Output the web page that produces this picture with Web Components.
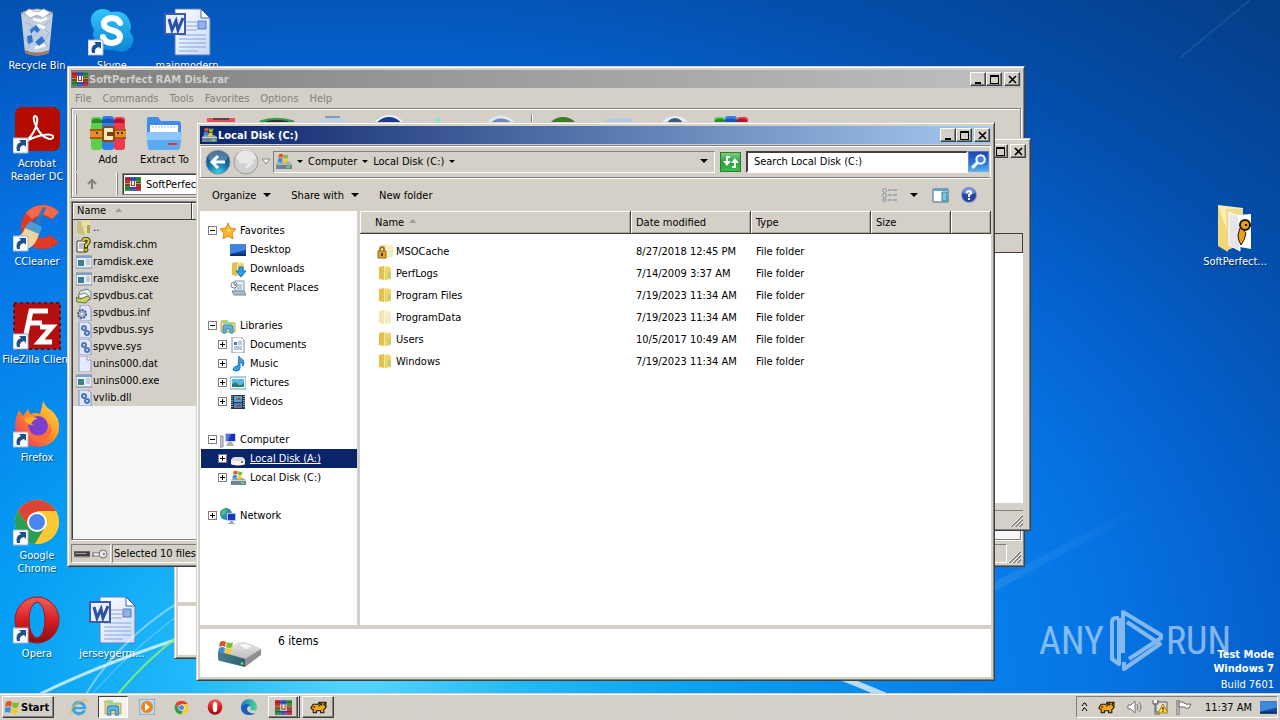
<!DOCTYPE html>
<html lang="en">
<head>
<meta charset="utf-8">
<title>Desktop</title>
<style>
  :root {
    --face: #d4d0c8;
    --shadow: #808080;
    --dark: #404040;
    --navy: #0a246a;
  }
  html, body { height: 100%; margin: 0; }
  body {
    overflow: hidden;
    color: #000;
    font: 11px/13px "DejaVu Sans Condensed", "DejaVu Sans", "Noto Sans", sans-serif;
  }
</style>
</head>
<body>
<win-desktop></win-desktop>

<script>
/* ---- icons ---------------------------------------------------------- */

// Each entry is [viewBox, markup]. Gradient ids are scoped by the shadow root.
const FLAG = `<path d="M1 2q3-2 6 0L6 7Q3 5 0 7z" fill="#e8502a"/><path d="M8 2q3 2 6 0l-1 5q-3 2-6 0z" fill="#7cbf2e"/>
  <path d="M0 8q3-2 6 0l-1 5q-3-2-6 0z" fill="#3b8ee0"/><path d="M7 8q3 2 6 0l-1 5q-3 2-6 0z" fill="#fbc725"/>`;
const RAR = `<path fill="#d02838" d="M0 1h5v5H0z"/><path fill="#3d5bd0" d="M5 1h6v5H5z"/><path fill="#2c9a3c" d="M11 1h5v5h-5z"/>
  <path fill="#2c9a3c" d="M0 10h5v5H0z"/><path fill="#4a5cc8" d="M5 10h6v5H5z"/><path fill="#c83048" d="M11 10h5v5h-5z"/>
  <path d="M0 3h16M0 12h16" stroke="#1c1420" opacity=".5"/><path fill="#7c4020" d="M0 6h16v4H0z"/><path fill="#c89060" d="M0 7h5v1H0zM11 7h5v1h-5z"/>
  <path fill="#f4ecdc" d="M5 5h6v6H5z"/><path fill="#8a4a28" d="M6 5h1v4h2V5h1v5H6z"/>`;
const DRIVE = `<path d="M1 10l3-2h9l3 2v5H1z" fill="#8fa6b4"/><path d="M1 10h15v5H1z" fill="#6b8496"/><path d="M1 10h15v1H1z" fill="#c8d6de"/><path d="M11 12h3v2h-3z" fill="#5ee05a"/>`;
const WINDRIVE = `${DRIVE}<g transform="translate(3 0) scale(.68)">${FLAG}</g>`;
const BADGE = `<path d="M0 32h15v15H0z" fill="#fff" stroke="#9bb6d8"/><path d="M4 45q-2-7 4-9l-2-2h7v7l-2-2q-5 1-4 6z" fill="#1f4f8c"/>`;
const FOLDER = `<path d="M2 2l5-1v14l-5-1z" fill="#e2c04c"/><path d="M7 1h5v13l-5 1z" fill="#f7e9a0"/><path d="M8 3l6-1v12l-6 1z" fill="#ecd468"/><path d="M11 8l3-1v6l-3 1z" fill="#bcd07a"/>`;
const WORD = `<defs><linearGradient id="w" x1="0" x2="1" y2="1"><stop stop-color="#fff"/><stop offset="1" stop-color="#c5d8f8"/></linearGradient></defs>
  <path d="M12 1h26l9 9v37H12z" fill="url(#w)" stroke="#5c7cc0"/><path d="M38 1v9h9z" fill="#fff" stroke="#3f5fae"/>
  <path d="M23 14h11M23 18h11M23 22h11M16 27h27M16 31h27M16 35h27M16 39h27M16 43h19" stroke="#8aa5dc"/>
  <path d="M35 13h8v8h-8z" fill="#8fb0e8" stroke="#5a7ac4"/><path d="M2 6h20v20H2z" fill="#e8f0fe" stroke="#3b5dae" stroke-width="2"/>
  <path d="M6 11l3 11 4-9 2 9 5-12" fill="none" stroke="#2b4fa4" stroke-width="3"/>`;
const CHROME = `<circle cx="24" cy="24" r="22" fill="#fbc934"/><path d="M5 13a22 22 0 0 1 38 0L24 14l-9 14z" fill="#dc4535"/>
  <path d="M5 13a22 22 0 0 0 17 33l10-17-16 0z" fill="#2b9f52"/><path d="M43 13H24v10l9 6-11 17a22 22 0 0 0 21-33z" fill="#fbc934"/>
  <circle cx="24" cy="24" r="10" fill="#fff"/><circle cx="24" cy="24" r="8" fill="#4a86ee"/>`;
const OPERA = `<defs><linearGradient id="o" x2="0" y2="1"><stop stop-color="#f4605c"/><stop offset=".5" stop-color="#d81e22"/><stop offset="1" stop-color="#8c0c10"/></linearGradient></defs>`;
const EXE = `<path d="M0 2h16v12H0z" fill="#e8eef8" stroke="#6c86a8"/><path d="M0 2h16v2H0z" fill="#7ba0d0"/><path d="M2 6h6v6H2z" fill="#3f7f8c"/><path d="M10 6h4M10 8h4M10 10h4" stroke="#98a8c0"/>`;
const SYS = `<path d="M3 0h9l3 3v13H3z" fill="#dfe8fa" stroke="#7f92c4"/><circle cx="8" cy="6" r="2" fill="none" stroke="#4c74b8" stroke-width="2"/><circle cx="11" cy="11" r="2" fill="none" stroke="#4c74b8" stroke-width="2"/>`;
const CREATURE = `<path d="M1 8l2-3h5l1-2h6v5l-2 2v3h-3v-2H6v2H3v-3l-2-1z" fill="#f2a818" stroke="#1c1408"/><path d="M8 3l2 2-2 2M15 3l-2 2 2 2M11 3v3" fill="none" stroke="#1c1408"/><path d="M3 7h2v1H3z"/>`;
const MONITOR = `<path d="M0 2h16v11H0z" fill="#16459c"/><path d="M0 2h16v6L0 12z" fill="#3f86dc"/><path d="M0 12h16v2H0z" fill="#0d2f6c"/>`;
const EXPLORER = `<path d="M1 3h5l1 2h8v9H1z" fill="#f6dc80" stroke="#c8a444"/><path d="M3 2h5v2h6v2H3z" fill="#9cd88c"/><path d="M3 15V9q0-2 2-2h6q2 0 2 2v6h-3v-4H6v4z" fill="#5cb4e4" stroke="#3a88bc"/>`;

const ICONS = {
  recycle: ['0 0 48 48', `<path d="M8 5l4 40q12 5 24 0l4-40z" fill="#d4dde4" fill-opacity=".9"/><path d="M8 5q16-8 32 0q-16 8-32 0z" fill="#f4f6f7" stroke="#8a98a4"/>
    <path d="M11 5l5-4 8 3 7-3 6 4-7 5-6-3-7 3z" fill="#fff" stroke="#a8b4b0"/><path d="M12 14l8 4-5 5M37 12l-7 7 6 6-5 8 4 5M12 30l5 7-3 4" fill="none" stroke="#a8b4ba"/><path d="M20 11l8 2 6-3M22 40l10-3M24 17l8 3" stroke="#f8fafa" stroke-width="3" fill="none"/>
    <path d="M17 22l6-5 4 5-3 3-3-3-3 4zM14 28l5-1 1 7-5 2zM22 34l7-6 3 5-6 5z" fill="#2f74d0"/><path d="M12 42q12 5 24 0v3q-12 5-24 0z" fill="#9c7a66"/>`],
  skype: ['0 0 48 48', `<defs><linearGradient id="s" x2="0" y2="1"><stop stop-color="#35c4f8"/><stop offset="1" stop-color="#0a86d8"/></linearGradient></defs>
    <path d="M14 1q6 0 9 3 17-3 20 14 0 3-1 6 6 7 1 15-8 8-17 3Q8 44 5 27q0-2 1-5Q1 14 4 7q4-6 10-6z" fill="url(#s)"/>
    <path d="M32 15q-2-5-9-5-7 1-7 6 0 4 7 6 9 2 9 7 0 5-8 6-7 0-9-6" fill="none" stroke="#fff" stroke-width="6" stroke-linecap="round"/>${BADGE}`],
  word: ['0 0 48 48', WORD],
  acrobat: ['0 0 48 48', `<rect x="2" y="1" width="45" height="44" rx="7" fill="#b30b00"/><path d="M10 37q8-4 13-16 3-10-1-11-3 1 1 10 5 11 13 13 5 0 4-3-3-3-14 0-10 3-16 7z" fill="none" stroke="#fff" stroke-width="2"/>${BADGE}`],
  ccleaner: ['0 0 48 48', `<path d="M46 8A22 22 0 1 0 46 38l-9-7a11 11 0 1 1 1-15z" fill="#df3a26"/><path d="M46 8A22 22 0 0 0 13 9l6 6q12-8 20 0z" fill="#f26a4c"/>
    <path d="M30 3l3 1-7 18-5-2z" fill="#2c78b8"/><path d="M17 17l12 6-3 8-15-6z" fill="#4c9cd4"/><path d="M12 24l14 6q-3 12-12 15L2 34q8-3 10-10z" fill="#f0d4a0"/>${BADGE}`],
  filezilla: ['0 0 48 48', `<rect x="1" y="1" width="46" height="46" fill="#b50f12" stroke="#6e0a0c" stroke-width="2" stroke-dasharray="3 3"/>
    <path d="M13 32L18 9h17M15 21h14M27 25h12L26 40h13" fill="none" stroke="#fff" stroke-width="5"/>${BADGE}`],
  firefox: ['0 0 48 48', `<defs><linearGradient id="f" x1="1" y1="0" x2="0" y2="1"><stop stop-color="#ffe24a"/><stop offset=".45" stop-color="#ff9422"/><stop offset="1" stop-color="#e8216c"/></linearGradient></defs>
    <path d="M30 1q3 7 8 9 9 8 8 18a22 19 0 0 1-44 0Q2 18 6 10l4 6 5-7 2 5q6-2 10 0 2-7 3-13z" fill="url(#f)"/><circle cx="25" cy="26" r="10" fill="#7b3fd0"/><path d="M11 19q8-4 14 0-4 0-6 3t3 3q-8 1-11-6z" fill="#ffb02a"/>
    <path d="M15 26q3 12 14 9 9-4 6-12 6 6 1 14-8 7-17 3-6-5-4-14z" fill="#ff6a34"/>${BADGE}`],
  chrome: ['0 0 48 48', CHROME + BADGE],
  chromeSmall: ['0 0 48 48', CHROME],
  opera: ['0 0 48 48', OPERA + `<path fill-rule="evenodd" d="M24 1a22 23 0 0 1 0 46 22 23 0 0 1 0-46zM24 6a8 18 0 0 0 0 36 8 18 0 0 0 0-36z" fill="url(#o)" stroke="#a81418"/>${BADGE}`],
  operaSmall: ['0 0 48 48', OPERA + `<ellipse cx="24" cy="24" rx="22" ry="23" fill="url(#o)"/><ellipse cx="24" cy="24" rx="7" ry="16" fill="#fff"/>`],
  softfolder: ['0 0 48 48', `<path d="M7 1l10 3v44L7 42z" fill="#f0d878"/><path d="M7 1l25 3v20H15z" fill="#f8eeb4"/><path d="M15 5h17l-1 35-14 6z" fill="#ecd890"/>
    <path d="M18 8l11 5v34l-11-6z" fill="#e8e4ec" stroke="#fff"/><path d="M27 11l13-1v35l-11-2z" fill="#fff"/>
    <circle cx="34" cy="21" r="5" fill="#e8a01c" stroke="#1c1408" stroke-width="2"/><path d="M29 24q4 2 6 5-1 7-5 12-3-5-3-10z" fill="#e8a01c" stroke="#1c1408"/><path d="M34 21h2" stroke="#1c1408" stroke-width="2"/>`],

  rar: ['0 0 16 16', RAR],
  rarBig: ['0 0 36 36', `<rect x="1" y="2" width="11" height="33" rx="3" fill="#5fcf4a"/><rect x="12" y="1" width="12" height="34" rx="3" fill="#2f7fe4"/><rect x="24" y="2" width="11" height="33" rx="3" fill="#ee3a4c"/>
    <path d="M2 5q5-3 10 0v3H2z" fill="#2a8a2c"/><path d="M12 5q6-3 12 0v3H12z" fill="#1c54b0"/><path d="M24 5q5-3 10 0v3H24z" fill="#b01828"/>
    <path d="M0 14h36v10H0z" fill="#e4902a"/><path d="M0 14h36v2H0zM0 22h36v2H0z" fill="#a85a14"/><rect x="13" y="12" width="11" height="14" rx="2" fill="#fbe8c0" stroke="#8a4a10" stroke-width="2"/><path d="M17 17h7v4h-7z" fill="#7a4010"/><path d="M6 18h2M27 18h2M31 18h2" stroke="#5a2c08" stroke-width="2"/>`],
  extract: ['0 0 36 36', `<path d="M1 4q0-2 2-2h9l3 4h17q3 0 3 3v8H1z" fill="#3f8ce8"/><path d="M4 10h28v9H4z" fill="#fff"/><path d="M6 12h24" stroke="#9cb8dc" stroke-dasharray="2 1"/>
    <path d="M0 17h36l-2 15q0 3-3 3H5q-3 0-3-3z" fill="#8cc6fa"/><path d="M1 25h34l-1 8q-1 2-3 2H5q-3 0-3-2z" fill="#5ca8f4"/><path d="M22 28h9v2h-9z" fill="#d83c2c"/>`],
  toolRed: ['0 0 36 36', `<path d="M4 3h28v30H4z" fill="#e8505c"/><path d="M10 3h16v2H10z" fill="#5a4444"/>`],
  toolGreen: ['0 0 40 36', `<path d="M1 4q18-6 38 0v28H1z" fill="#2f9c50"/><path d="M8 5q12-3 24 0v3H8z" fill="#3a2a2a"/>`],
  toolBin: ['0 0 36 36', `<path d="M4 6q14-10 28 0l-3 28H7z" fill="#c0d0e0"/><path d="M10 2h15" stroke="#486080"/>`],
  toolNavy: ['0 0 36 36', `<circle cx="18" cy="18" r="17" fill="#1c3c94" stroke="#e8f0f8" stroke-width="2"/>`],
  toolPale: ['0 0 36 36', `<path d="M8 4l5-2v16H8z" fill="#8ce0dc"/><path d="M22 4l6 2v14h-6z" fill="#f0c0c4"/>`],
  toolBlue: ['0 0 36 36', `<circle cx="18" cy="18" r="16" fill="#7088b8" stroke="#dce8f4" stroke-width="3"/>`],
  toolLeaf: ['0 0 36 36', `<circle cx="18" cy="19" r="17" fill="#3c7c24"/>`],
  toolSheet: ['0 0 36 36', `<path d="M5 4l26-1v30H5z" fill="#b4c8e8"/>`],
  toolDisc: ['0 0 36 36', `<circle cx="18" cy="18" r="17" fill="#e4ecf4"/><circle cx="18" cy="12" r="9" fill="#405878"/>`],

  upfolder: ['0 0 16 16', `<path d="M1 1h8v14l-5-1-3-1z" fill="#c8c080"/><path d="M5 1h9v12l-5 2z" fill="#e8e0a0"/><path d="M11 5h3v8h-3z" fill="#a8a860"/>`],
  chm: ['0 0 16 16', `<path d="M1 4h9v11H1z" fill="#f4f4e4" stroke="#404038"/><path d="M3 7h5M3 9h5M3 11h5" stroke="#7888a8"/><path d="M7 4q1-3 4-2 3 1 1 4l-2 2v3" fill="none" stroke="#403c10" stroke-width="4"/><path d="M7 4q1-3 4-2 3 1 1 4l-2 2v2" fill="none" stroke="#d8d040" stroke-width="2"/><circle cx="10" cy="13" r="2" fill="#d8d040" stroke="#403c10"/>`],
  exe: ['0 0 16 16', EXE],
  cat: ['0 0 16 16', `<path d="M4 3l7-2 4 3v7l-9 3-4-3z" fill="#dce8ec" stroke="#6c8488"/><path d="M2 7l7-2 4 3-8 3z" fill="#f4f8f8" stroke="#6c8488"/><path d="M0 9l4 2 8-3 2 2-4 5-9-1z" fill="#c8d06c" stroke="#6c7430"/>`],
  inf: ['0 0 16 16', `<path d="M4 0h8l3 3v13H4z" fill="#dce4f8" stroke="#7f92c4"/><circle cx="6" cy="9" r="4" fill="#a8b4cc" stroke="#4c5c7c" stroke-width="2" stroke-dasharray="2 1"/><circle cx="6" cy="9" r="1" fill="#fff"/>`],
  sys: ['0 0 16 16', SYS],
  dat: ['0 0 16 16', `<path d="M3 0h8l4 4v12H3z" fill="#e4eaf8" stroke="#8c98c0"/><path d="M11 0v4h4" fill="#fff" stroke="#8c98c0"/>`],

  folder: ['0 0 16 16', FOLDER],
  folderFaint: ['0 0 16 16', `<g opacity=".4">${FOLDER}</g>`],
  folderLock: ['0 0 16 16', `<g opacity=".4" transform="translate(2)">${FOLDER}</g><path d="M3 9V6q0-2 2-2t2 2v3" fill="none" stroke="#a87c1c" stroke-width="2"/><path d="M1 8h8v7H1z" fill="#dca428" stroke="#94681c"/><path d="M5 10v3" stroke="#5c3c0c" stroke-width="2"/>`],
  windrive: ['0 0 16 16', WINDRIVE],
  disk: ['0 0 16 16', `<path d="M1 9q1-3 4-3h6q3 0 4 3v3q0 2-2 2H3q-2 0-2-2z" fill="#d8dade"/><path d="M1 9q7 2 14 0v4q-7 3-14 0z" fill="#f4f4f2"/><path d="M11 10h2v2h-2z" fill="#807858"/>`],
  bigdrive: ['0 0 48 32', `<defs><linearGradient id="d" x2="1"><stop stop-color="#4c7c94"/><stop offset="1" stop-color="#2c6068"/></linearGradient><linearGradient id="t" x2="0" y2="1"><stop stop-color="#ececec"/><stop offset="1" stop-color="#b8b8b8"/></linearGradient></defs>
    <path d="M1 14L22 5q3-1 6 0l15 6q2 2 0 3L28 23z" fill="url(#t)"/><path d="M21 8l7-2 9 3-8 4z" fill="#f8f8f8" stroke="#d0d0d0"/><path d="M1 14l27 8v8L3 24q-2 0-2-3z" fill="url(#d)"/><path d="M28 22l16-10v6L28 30z" fill="#909090"/><path d="M24 26l2 1" stroke="#6cf06c" stroke-width="2"/><g transform="translate(2 3)">${FLAG}</g>`],
  star: ['0 0 16 16', `<path d="M8 0l2 5 6 1-4 4 1 6-5-3-5 3 1-6-4-4 6-1z" fill="#fcb62c" stroke="#e0841c"/><path d="M8 3l1 4 3 0-4 2z" fill="#ffe48c"/>`],
  desktop: ['0 0 16 16', MONITOR],
  downloads: ['0 0 16 16', FOLDER + `<path d="M9 6h4v4h3l-5 6-5-6h3z" fill="#2c9cec" stroke="#1c6cb4"/>`],
  recent: ['0 0 16 16', `<path d="M5 1h9v12H5z" fill="#eef2f6" stroke="#8494a4"/><path d="M7 5h5M7 7h5M7 9h5" stroke="#90a4bc"/><circle cx="4" cy="5" r="3" fill="#fff" stroke="#788898"/><path d="M4 3v2h2" stroke="#506070" fill="none"/><path d="M2 11h12l2 4H4z" fill="#a8bccc" stroke="#788898"/>`],
  libraries: ['0 0 16 16', EXPLORER],
  documents: ['0 0 16 16', `<path d="M2 0h9l3 3v13H2z" fill="#fff" stroke="#7890a8"/><path d="M4 5h3v3H4z" fill="#4c7cb4"/><path d="M8 5h4M8 7h4M4 10h8M4 12h8" stroke="#6c94c0"/>`],
  music: ['0 0 16 16', `<path d="M9 0q1 3 4 4 2 3 0 6 0-3-3-4v6q0 3-4 3-3 0-3-2 1-3 5-3z" fill="#3c9ce4" stroke="#1c78c0"/>`],
  pictures: ['0 0 16 16', `<path d="M0 2h16v12H0z" fill="#fff" stroke="#5c9cc4"/><path d="M2 4h12v8H2z" fill="#58b8e8"/><path d="M2 9q4-3 6 0t6-1v4H2z" fill="#2c7c68"/>`],
  videos: ['0 0 16 16', `<path d="M1 1h14v14H1z" fill="#283440"/><path d="M4 2h8v6H4z" fill="#4ca8e0"/><path d="M4 9h8v5H4z" fill="#3c84c8"/><path d="M2 2v12M14 2v12" stroke="#fff" stroke-dasharray="1 1"/><path d="M6 6l3-3 2 3zM6 13l3-3 2 3z" fill="#a8482c"/>`],
  computer: ['0 0 16 16', `<path d="M0 4h3v11H0z" fill="#c8ccd0" stroke="#8890a0"/><path d="M5 1h11v9H5z" fill="#c8d4e0"/><path d="M6 2h9v7H6z" fill="#1c30b8"/><path d="M6 2h5L8 9H6z" fill="#4474e8"/><path d="M8 10h4l2 4H6z" fill="#a8b0b8"/>`],
  network: ['0 0 16 16', `<circle cx="6" cy="6" r="6" fill="#2c8cc0"/><path d="M3 1l4 1-2 4-4 2zM6 8l3-2v5z" fill="#5cc454"/><path d="M7 5h9v8H7z" fill="#b8c8d8"/><path d="M8 6h7v6H8z" fill="#1c34c0"/><path d="M10 13h3v2h2v1H8v-1h2z" fill="#98a4b0"/>`],

  back: ['0 0 26 26', `<defs><radialGradient id="b" cx=".5" cy="1" r="1"><stop stop-color="#3ce0f8"/><stop offset=".45" stop-color="#1878b0"/><stop offset="1" stop-color="#0c3c6c"/></radialGradient></defs>
    <circle cx="13" cy="13" r="12" fill="url(#b)" stroke="#7c8894"/><path d="M3 10a10 10 0 0 1 20 0q-10 5-20 0z" fill="#fff" opacity=".25"/><path d="M13 7l-6 6 6 6M7 13h13" fill="none" stroke="#fff" stroke-width="3"/>`],
  forward: ['0 0 26 26', `<circle cx="13" cy="13" r="12" fill="#cfcfcd" stroke="#98989a"/><path d="M3 10a10 10 0 0 1 20 0q-10 5-20 0z" fill="#fff" opacity=".5"/><path d="M13 7l6 6-6 6M19 13H6" fill="none" stroke="#e8e8e6" stroke-width="3"/>`],
  chevron: ['0 0 10 8', `<path d="M1 1h8L5 6z" fill="#f4f4f0" stroke="#888"/>`],
  down: ['0 0 8 5', `<path d="M0 0h8L4 4z"/>`],
  downTiny: ['0 0 6 4', `<path d="M0 0h6L3 3z"/>`],
  sort: ['0 0 7 4', `<path d="M0 4h7L4 0z" fill="#a09c94"/>`],
  refresh: ['0 0 21 20', `<defs><linearGradient id="r" x2="0" y2="1"><stop stop-color="#7cd47c"/><stop offset=".5" stop-color="#28a03c"/><stop offset="1" stop-color="#3cc04c"/></linearGradient></defs>
    <rect width="20" height="19" x=".5" y=".5" fill="url(#r)" stroke="#2c7c34"/><path d="M10 5H7v6M12 15h3V9" fill="none" stroke="#fff" stroke-width="2"/><path d="M3 9h8l-4 5zM11 11h8l-4-5z" fill="#fff"/>`],
  search: ['0 0 20 20', `<defs><linearGradient id="q" x2="0" y2="1"><stop stop-color="#1c44b4"/><stop offset=".6" stop-color="#2c78dc"/><stop offset="1" stop-color="#54b8f4"/></linearGradient></defs>
    <path d="M0 0h20v20H0z" fill="url(#q)" stroke="#90a8c8"/><circle cx="12" cy="8" r="4" fill="#3c84dc" stroke="#fff" stroke-width="2"/><path d="M9 11l-5 5" stroke="#fff" stroke-width="3"/>`],
  views: ['0 0 16 14', `<path d="M1 1h3v3H1zM1 6h3v3H1zM1 11h3v2H1z" fill="#fff" stroke="#808890"/><path d="M6 2h4M11 2h4M6 7h4M11 7h4M6 12h4M11 12h4" stroke="#7084a0"/>`],
  pane: ['0 0 17 15', `<path d="M1 1h15v13H1z" fill="#fff" stroke="#2c6c94"/><path d="M1 1h15v2H1z" fill="#5ca4cc"/><path d="M10 4h5v9h-5z" fill="#74c4dc" stroke="#3c84a4"/>`],
  help: ['0 0 16 16', `<circle cx="8" cy="8" r="8" fill="#8c9cc4"/><circle cx="8" cy="8" r="7" fill="#2444a8"/><path d="M2 6a6 6 0 0 1 12 0q-6 3-12 0z" fill="#7090d8"/><path d="M6 6q0-2 2-2t2 2q0 1-2 2v2M8 11v2" fill="none" stroke="#fff" stroke-width="2"/>`],
  up: ['0 0 12 12', `<path d="M6 11V2M2 6l4-4 4 4" fill="none" stroke="#808080" stroke-width="2"/>`],
  min: ['0 0 9 9', `<path d="M1 7h6v2H1z"/>`],
  max: ['0 0 9 9', `<path d="M0 0h9v9H0zM1 2v6h7V2z" fill-rule="evenodd"/>`],
  close: ['0 0 9 9', `<path d="M1 1l7 7M8 1L1 8" stroke="#000" stroke-width="1.6"/>`],
  grip: ['0 0 13 13', `<path d="M1 13L13 1M5 13l8-8M9 13l4-4" stroke="#808080" stroke-width="2"/><path d="M0 13L13 0M4 13l9-9M8 13l5-5" stroke="#fff"/>`],
  statusDisk: ['0 0 16 8', `<path d="M1 2h14v5H1z" fill="#404040"/><path d="M2 4h10" stroke="#a0a0a0"/><path d="M1 7h14" stroke="#909090"/>`],
  statusKey: ['0 0 16 10', `<path d="M0 4h8v3H0l2-1z" fill="#fff" stroke="#707070"/><circle cx="11" cy="5" r="4" fill="#e8e8e8" stroke="#707070"/><circle cx="12" cy="5" r="1" fill="#606060"/>`],

  start: ['0 0 15 15', FLAG],
  ie: ['0 0 16 16', `<circle cx="8" cy="9" r="5" fill="none" stroke="#3ca4e4" stroke-width="3"/><path d="M4 9h9" stroke="#3ca4e4" stroke-width="2"/><path d="M1 14Q-1 9 9 3q7-3 6 1" fill="none" stroke="#f0bc30"/><path d="M11 11h4v-1h-4z" fill="#d4d0c8"/>`],
  wmp: ['0 0 16 16', `<path d="M0 0h16v16H0z" fill="#bcd8f0" stroke="#5c8cc0"/><circle cx="8" cy="8" r="6" fill="#f08418"/><path d="M6 4l5 4-5 4z" fill="#fff"/>`],
  edge: ['0 0 16 16', `<defs><linearGradient id="e" x2="1"><stop stop-color="#1478d4"/><stop offset="1" stop-color="#4cd88c"/></linearGradient></defs>
    <circle cx="8" cy="8" r="8" fill="url(#e)"/><path d="M0 8q0 8 9 8 3 0 5-2-7 1-8-4 0-3 3-4-5-3-9 2z" fill="#1660bc"/><path d="M9 7q3 4-1 3 2 2 7 1l-1 3q-7 1-8-4 0-2 3-3z" fill="#d4d0c8"/>`],
  creature: ['0 0 16 16', CREATURE],
  overflow: ['0 0 7 10', `<path d="M1 4l2-3h1l2 3M1 9l2-3h1l2 3" fill="none" stroke="#000"/>`],
  speaker: ['0 0 17 14', `<path d="M1 5h3l4-4v12L4 9H1z" fill="#fff" stroke="#707070"/><path d="M10 4q2 3 0 6M12 2q4 5 0 10" fill="none" stroke="#707070"/>`],
  netwarn: ['0 0 16 16', `<path d="M4 3h11v10H4z" fill="#dce0dc" stroke="#606060"/><path d="M1 1v4h5V1M3 5v10h5" fill="none" stroke="#606060"/><path d="M2 1h3v3H2z" fill="#fff"/><path d="M11 5l5 9H6z" fill="#fcd434" stroke="#a8841c"/><path d="M11 8v3M11 12v1" stroke="#000"/>`],
  flag: ['0 0 17 15', `<path d="M1 0h2v15H1z" fill="#fff" stroke="#606060"/><path d="M3 2q3-1 5 1t7 1l-2 4q-3 1-5-1H3z" fill="#fff" stroke="#606060"/>`],
};

/* ---- shared pieces -------------------------------------------------- */

const CONTROLS = `
  *, *::before { box-sizing: border-box; }
  button {
    margin: 0; padding: 0; border: 0;
    display: inline-flex; align-items: center; justify-content: center;
    background: none; color: inherit; font: inherit; white-space: nowrap;
  }
  a { color: inherit; text-decoration: none; }
`;

class Part extends HTMLElement {
  constructor() {
    super();
    this.attachShadow({ mode: 'open' });
  }

  connectedCallback() {
    this.shadowRoot.innerHTML = `<style>${CONTROLS}${this.styles()}</style>${this.markup()}`;
  }
}

// <ui-icon name w h> — one inline SVG from the ICONS table.
class UiIcon extends Part {
  styles() {
    const w = this.getAttribute('w') || 16;
    const h = this.getAttribute('h') || w;
    return `
      :host { display: inline-block; flex: none; width: ${w}px; height: ${h}px; }
      svg { display: block; width: 100%; height: 100%; }`;
  }

  markup() {
    const [box, body] = ICONS[this.getAttribute('name')];
    return `<svg viewBox="${box}" aria-hidden="true">${body}</svg>`;
  }
}

const icon = (name, w = 16, h = w) => `<ui-icon name="${name}" w="${w}" h="${h}"></ui-icon>`;

// <desk-icon icon> — shortcut on the desktop, label in the default slot.
class DeskIcon extends Part {
  styles() {
    return `
      :host { display: block; min-width: 0; color: #fff; }
      button { flex-direction: column; width: 100%; gap: 3px; }
      span { width: 100%; text-align: center; text-shadow: 1px 1px 1px #0008; white-space: pre-line; }`;
  }

  markup() {
    return `<button>${icon(this.getAttribute('icon'), 48)}<span><slot></slot></span></button>`;
  }
}

// <win-frame icon caption active> — raised frame and caption bar.
class WinFrame extends Part {
  styles() {
    return `
      :host {
        display: flex; flex-direction: column;
        box-sizing: border-box;
        padding: 2px;
        background: var(--face);
        border: 1px solid; border-color: var(--face) var(--dark) var(--dark) var(--face);
        box-shadow: inset 1px 1px #fff, inset -1px -1px var(--shadow);
      }
      header {
        display: flex; align-items: center; flex: none;
        margin: 1px; height: 18px; padding: 0 1px;
        background: linear-gradient(90deg, #808080, #c0c0c0);
        color: var(--face); font-weight: bold;
      }
      :host([active]) header { background: linear-gradient(90deg, var(--navy), #a6caf0); color: #fff; }
      :host([plain]) header { background: none; }
      h1 { flex: 1; min-width: 0; margin: 0 0 0 1px; font: inherit; white-space: nowrap; }
      header button {
        width: 16px; height: 14px;
        background: var(--face);
        border: 1px solid; border-color: #fff var(--dark) var(--dark) #fff;
        box-shadow: inset -1px -1px var(--shadow);
      }
      header button:last-child { margin-left: 2px; }
      .body { flex: 1; min-height: 0; display: flex; flex-direction: column; margin: 0 1px 1px; }`;
  }

  markup() {
    const name = this.getAttribute('icon');
    return `
      <header>
        ${name ? icon(name) : ''}
        <h1>${this.getAttribute('caption') || ''}</h1>
        <button aria-label="Minimize">${icon('min', 9)}</button>
        <button aria-label="Maximize">${icon('max', 9)}</button>
        <button aria-label="Close">${icon('close', 9)}</button>
      </header>
      <div class="body"><slot></slot></div>`;
  }
}

/* ---- archive manager ------------------------------------------------ */

const ARCHIVE_FILES = [
  ['upfolder', '..'], ['chm', 'ramdisk.chm'], ['exe', 'ramdisk.exe'], ['exe', 'ramdiskc.exe'],
  ['cat', 'spvdbus.cat'], ['inf', 'spvdbus.inf'], ['sys', 'spvdbus.sys'], ['sys', 'spvve.sys'],
  ['dat', 'unins000.dat'], ['exe', 'unins000.exe'], ['sys', 'vvlib.dll'],
];
const ARCHIVE_TOOLS = ['toolRed', 'toolGreen', 'toolBin', 'toolNavy', 'toolPale', 'toolBlue', '',
  'toolLeaf', 'toolSheet', 'toolDisc', 'rarBig'];

class ArchiveView extends Part {
  styles() {
    return `
      :host { display: flex; flex-direction: column; flex: 1; min-height: 0; }
      nav { display: flex; gap: 11px; padding: 3px 4px 3px; color: var(--shadow); }
      .bars { border: 1px solid var(--shadow); box-shadow: inset 1px 1px #fff, 1px 1px #fff; padding: 2px 3px; }
      .tools { display: flex; height: 60px; padding-top: 4px; }
      .tools button { flex-direction: column; justify-content: flex-start; min-width: 56px; padding: 0 4px; gap: 2px; }
      .grip { width: 2px; margin-right: 3px; border-left: 1px solid #fff; background: var(--shadow); flex: none; }
      .sep { width: 2px; margin: 0 2px; border-left: 1px solid var(--shadow); background: #fff; }
      .path { display: flex; height: 22px; margin-top: 2px; }
      .up { width: 24px; margin-right: 12px; }
      .combo { display: flex; align-items: center; flex: 1; gap: 3px; padding-left: 2px; margin-left: 1px; background: #fff; border: 1px solid var(--shadow); box-shadow: inset 1px 1px var(--dark); }
      select { appearance: none; flex: 1; border: 0; background: none; font: inherit; color: inherit; padding: 0 2px; }
      .list { flex: 1; min-height: 0; margin: 3px 0 4px; background: #f6f6f6; border: 1px solid var(--shadow); box-shadow: inset 1px 1px var(--dark), 1px 1px #fff; padding: 1px; }
      table { border-collapse: collapse; width: 100%; table-layout: fixed; }
      th { height: 16px; padding: 0 4px; font-weight: normal; text-align: left; background: var(--face); border-right: 1px solid var(--dark); border-bottom: 1px solid var(--dark); box-shadow: inset 1px 1px #fff; }
      th ui-icon { margin: 0 0 2px 6px; }
      td { height: 17px; padding: 0 3px; background: var(--face); }
      td span { display: flex; align-items: center; gap: 1px; }
      footer { display: flex; gap: 1px; height: 19px; align-items: stretch; }
      footer div { display: flex; align-items: center; padding: 0 1px; border: 1px solid; border-color: var(--shadow) #fff #fff var(--shadow); }
      footer .text { flex: 1; }
      footer ui-icon { align-self: center; }
      footer ui-icon.corner { align-self: flex-end; }`;
  }

  markup() {
    const rows = ARCHIVE_FILES.map(([i, n]) => `<tr><td><span>${icon(i)}${n}</span></td><td></td></tr>`).join('');
    const tools = ARCHIVE_TOOLS.map((t) => (t ? `<button aria-label="Tool">${icon(t, 36)}</button>` : '<i class="sep"></i>')).join('');
    return `
      <nav>${['File', 'Commands', 'Tools', 'Favorites', 'Options', 'Help'].map((t) => `<button>${t}</button>`).join('')}</nav>
      <div class="bars">
        <div class="tools"><i class="grip"></i>
          <button>${icon('rarBig', 36)}Add</button><button>${icon('extract', 36)}Extract To</button>${tools}
        </div>
        <div class="path"><i class="grip"></i><button class="up" aria-label="Up">${icon('up', 12)}</button><i class="grip"></i>
          <div class="combo">${icon('rar')}<select aria-label="Path"><option>SoftPerfect</option></select></div>
        </div>
      </div>
      <div class="list"><table>
        <colgroup><col style="width:118px"><col></colgroup>
        <thead><tr><th>Name ${icon('sort', 7, 4)}</th><th></th></tr></thead>
        <tbody>${rows}</tbody>
      </table></div>
      <footer><div>${icon('statusDisk', 18, 9)}${icon('statusKey', 18, 10)}</div><div class="text">Selected 10 files,</div><ui-icon class="corner" name="grip" w="13"></ui-icon></footer>`;
  }
}

// Plain white client area, with either a list header and status bar or a splitter.
class BlankView extends Part {
  styles() {
    return `
      :host { display: flex; flex-direction: column; flex: 1; min-height: 0; padding: 0 4px 0 0; }
      :host([split]) { padding: 0; }
      .client { flex: 1; background: #fff; }
      .header { height: 20px; margin-top: 72px; border: 1px solid var(--dark); border-left: 0; }
      .lower { height: 49px; margin-top: 4px; background: #fff; }
      footer { display: flex; justify-content: flex-end; align-items: flex-end; height: 17px; margin-top: 7px; border-top: 1px solid var(--shadow); }`;
  }

  markup() {
    return this.hasAttribute('split')
      ? '<div class="client"></div><div class="lower"></div>'
      : `<div class="header"></div><div class="client"></div><footer>${icon('grip', 13)}</footer>`;
  }
}

/* ---- file explorer -------------------------------------------------- */

class NavBar extends Part {
  styles() {
    return `
      :host {
        display: flex; align-items: center; flex: none; height: 33px; padding: 0 1px 0 4px;
        border: 1px solid; border-color: var(--shadow) #fff var(--shadow) #fff;
        box-shadow: inset 0 1px #fff, 0 1px #fff;
      }
      .back { margin-right: 2px; }
      .hist { width: 14px; }
      .address {
        display: flex; align-items: center; flex: 21; min-width: 0; height: 22px; padding: 0 6px 0 1px;
        border: 1px solid; border-color: var(--shadow) #fff #fff var(--shadow);
      }
      .address button { gap: 5px; margin-left: 5px; }
      .address .drop { margin-left: auto; }
      .refresh { margin: 0 5px; }
      input {
        flex: 10; min-width: 0; height: 22px; margin: 0; padding: 0 6px;
        background: #fff; color: #000; font: inherit; outline: none;
        border: 2px solid; border-color: var(--dark) #fff #fff var(--dark);
      }
      input::placeholder { color: #000; opacity: 1; }`;
  }

  markup() {
    return `
      <button class="back" aria-label="Back">${icon('back', 26)}</button>
      <button aria-label="Forward">${icon('forward', 26)}</button>
      <button class="hist" aria-label="Recent pages">${icon('chevron', 10, 8)}</button>
      <div class="address">
        ${icon('windrive', 17)}
        <button aria-label="Locations">${icon('downTiny', 6, 4)}</button>
        <button>Computer ${icon('downTiny', 6, 4)}</button>
        <button>Local Disk (C:) ${icon('downTiny', 6, 4)}</button>
        <button class="drop" aria-label="Previous locations">${icon('down', 8, 5)}</button>
      </div>
      <button class="refresh" aria-label="Refresh">${icon('refresh', 21, 20)}</button>
      <input type="text" aria-label="Search" placeholder="Search Local Disk (C:)">
      <button aria-label="Go">${icon('search', 21)}</button>`;
  }
}

class CommandBar extends Part {
  styles() {
    return `
      :host { display: flex; align-items: center; flex: none; height: 32px; margin-top: 1px; padding: 0 14px 0 12px; gap: 20px; }
      button { gap: 7px; }
      .views { margin-left: auto; gap: 12px; }
      .views + button { margin: 0 -8px 0 -6px; }`;
  }

  markup() {
    return `
      <button>Organize ${icon('down', 8, 5)}</button>
      <button>Share with ${icon('down', 8, 5)}</button>
      <button>New folder</button>
      <button class="views" aria-label="Change view">${icon('views', 16, 14)}${icon('down', 8, 5)}</button>
      <button aria-label="Preview pane">${icon('pane', 17, 15)}</button>
      <button aria-label="Help">${icon('help', 16)}</button>`;
  }
}

// [label, icon, expander, children]
const TREE = [
  ['Favorites', 'star', '-', [['Desktop', 'desktop'], ['Downloads', 'downloads'], ['Recent Places', 'recent']]],
  ['Libraries', 'libraries', '-', [['Documents', 'documents', '+'], ['Music', 'music', '+'], ['Pictures', 'pictures', '+'], ['Videos', 'videos', '+']]],
  ['Computer', 'computer', '-', [['Local Disk (A:)', 'disk', '+'], ['Local Disk (C:)', 'windrive', '+']]],
  ['Network', 'network', '+', []],
];

class FolderTree extends Part {
  styles() {
    return `
      :host { display: block; flex: none; width: 157px; padding: 10px 0 0; background: #fff; box-sizing: border-box; }
      ul { margin: 0; padding: 0; list-style: none; }
      .group { margin-bottom: 19px; }
      .row { display: flex; align-items: center; height: 19px; margin-left: 1px; padding-left: 7px; gap: 3px; }
      ul ul .row { padding-left: 17px; }
      a { padding-left: 1px; }
      .row.hot { background: var(--navy); color: #fff; }
      .hot a { text-decoration: underline; }
      .row button, .row i { flex: none; width: 9px; height: 9px; }
      .row button { border: 1px solid #808080; background: linear-gradient(#000, #000) center / 5px 1px no-repeat, #fff; }
      .row button.plus { background: linear-gradient(#000, #000) center / 5px 1px no-repeat, linear-gradient(#000, #000) center / 1px 5px no-repeat, #fff; }`;
  }

  row([label, name, exp]) {
    const box = exp
      ? `<button class="${exp === '+' ? 'plus' : ''}" aria-label="${exp === '+' ? 'Expand' : 'Collapse'} ${label}"></button>`
      : '<i></i>';
    return `<div class="row${label.endsWith('(A:)') ? ' hot' : ''}">${box}${icon(name)}<a href="#">${label}</a></div>`;
  }

  markup() {
    return `<ul>${TREE.map((g) => `
      <li class="group">${this.row(g)}<ul>${g[3].map((c) => `<li>${this.row(c)}</li>`).join('')}</ul></li>`).join('')}</ul>`;
  }
}

const FOLDERS = [
  ['folderLock', 'MSOCache', '8/27/2018 12:45 PM'],
  ['folder', 'PerfLogs', '7/14/2009 3:37 AM'],
  ['folder', 'Program Files', '7/19/2023 11:34 AM'],
  ['folderFaint', 'ProgramData', '7/19/2023 11:34 AM'],
  ['folder', 'Users', '10/5/2017 10:49 AM'],
  ['folder', 'Windows', '7/19/2023 11:34 AM'],
];

class FileList extends Part {
  styles() {
    return `
      :host { display: block; flex: 1; min-width: 0; margin-left: 3px; background: #fff; }
      table { width: 100%; border-spacing: 0; table-layout: fixed; }
      th {
        height: 23px; padding: 0 5px; font-weight: normal; text-align: left;
        background: var(--face);
        border-right: 1px solid var(--dark); border-bottom: 1px solid var(--dark);
        box-shadow: inset 1px 1px #fff, inset -1px -1px #aca899;
      }
      th:first-child { padding-left: 15px; }
      th ui-icon { margin: 0 0 3px 2px; }
      tbody::before { content: ""; display: block; height: 6px; }
      td { height: 22px; padding: 0 5px; white-space: nowrap; }
      td:first-child { padding-left: 17px; }
      td span { display: flex; align-items: center; gap: 3px; }`;
  }

  markup() {
    return `<table>
      <colgroup><col><col style="width:120px"><col style="width:120px"><col style="width:80px"><col style="width:40px"></colgroup>
      <thead><tr><th>Name ${icon('sort', 7, 4)}</th><th>Date modified</th><th>Type</th><th>Size</th><th></th></tr></thead>
      <tbody>${FOLDERS.map(([i, n, d]) => `<tr><td><span>${icon(i)}${n}</span></td><td>${d}</td><td>File folder</td><td></td><td></td></tr>`).join('')}</tbody>
    </table>`;
  }
}

class ExplorerView extends Part {
  styles() {
    return `
      :host { display: flex; flex-direction: column; flex: 1; min-height: 0; }
      main { display: flex; flex: 1; min-height: 0; }
      footer { display: flex; flex: none; height: 48px; margin-top: 4px; padding-left: 17px; gap: 13px; background: #fff; font-size: 12px; line-height: 16px; }
      footer ui-icon { align-self: center; }
      footer span { padding-top: 4px; }`;
  }

  markup() {
    return `
      <nav-bar></nav-bar>
      <command-bar></command-bar>
      <main><folder-tree></folder-tree><file-list></file-list></main>
      <footer>${icon('bigdrive', 48, 32)}<span>6 items</span></footer>`;
  }
}

/* ---- taskbar -------------------------------------------------------- */

class TaskBar extends Part {
  styles() {
    return `
      :host { display: flex; align-items: center; flex: none; height: 27px; padding: 2px 2px 1px; box-sizing: border-box; background: var(--face); box-shadow: inset 0 1px var(--face), inset 0 2px #fff; }
      .raised { border: 1px solid; border-color: #fff var(--dark) var(--dark) #fff; box-shadow: inset -1px -1px var(--shadow); }
      .start { height: 22px; padding: 0 4px 0 2px; gap: 1px; font-weight: bold; }
      .quick { width: 34px; height: 22px; }
      .first { margin-left: 8px; }
      .open { width: 30px; background: #f4f2ee; border: 1px solid; border-color: var(--dark) #fff #fff var(--dark); margin: 0 2px; }
      .app { width: 30px; height: 22px; margin-left: 2px; }
      .stack { width: 32px; border-right: 3px double var(--dark); }
      .ram { width: 32px; }
      .tray { display: flex; align-items: center; gap: 8px; height: 22px; margin-left: auto; padding: 0 0 0 4px; border: 1px solid; border-color: var(--shadow) #fff #fff var(--shadow); }
      .tray ui-icon[name=creature] { margin: 0 4px 0 2px; }
      .tray time { margin-left: 4px; }`;
  }

  markup() {
    return `
      <button class="start raised">${icon('start', 15)}Start</button>
      <button class="quick first" aria-label="Internet Explorer">${icon('ie', 18)}</button>
      <button class="quick open" aria-label="Explorer">${icon('libraries', 18)}</button>
      <button class="quick" aria-label="Media Player">${icon('wmp', 16)}</button>
      <button class="quick" aria-label="Chrome">${icon('chromeSmall', 15)}</button>
      <button class="quick" aria-label="Opera">${icon('operaSmall', 16)}</button>
      <button class="quick" aria-label="Edge">${icon('edge', 16)}</button>
      <button class="app stack raised" aria-label="Archive">${icon('rar', 17)}</button>
      <button class="app ram raised" aria-label="RAM Disk">${icon('creature', 17)}</button>
      <div class="tray">
        ${icon('overflow', 7, 10)}${icon('creature', 17)}${icon('speaker', 17, 14)}${icon('netwarn', 16)}${icon('flag', 17, 15)}
        <time>11:37 AM</time>${icon('desktop', 17)}
      </div>`;
  }
}

/* ---- desktop -------------------------------------------------------- */

// [grid column, grid row, icon, label]
const SHORTCUTS = [
  [1, 1, 'recycle', 'Recycle Bin'], [1, 2, 'acrobat', 'Acrobat\nReader DC'], [1, 3, 'ccleaner', 'CCleaner'],
  [1, 4, 'filezilla', 'FileZilla Client'], [1, 5, 'firefox', 'Firefox'], [1, 6, 'chrome', 'Google\nChrome'],
  [1, 7, 'opera', 'Opera'], [2, 1, 'skype', 'Skype'], [2, 7, 'word', 'jerseygerm...'],
  [3, 1, 'word', 'mainmodern'], [5, 3, 'softfolder', 'SoftPerfect...'],
];

class WinDesktop extends Part {
  styles() {
    return `
      :host { display: flex; flex-direction: column; height: 100vh; }
      .area {
        position: relative; flex: 1; min-height: 0; overflow: hidden;
        background: radial-gradient(ellipse 92% 112% at 28% 97%, #58d6fd 0, #22baf9 14%, #06a0f4 30%, #0686ec 46%, #0676e6 62%, #0560cc 78%, #0450ae 92%, #043e88 115%);
      }
      .streaks { position: absolute; inset: 0; width: 100%; height: 100%; }
      .icons { display: grid; grid-template: repeat(7, 98px) / repeat(3, 74px) 1fr 74px; column-gap: 1px; padding: 8px 8px 0 0; }
      win-frame { position: absolute; }
      .archive { left: 67px; top: 66px; right: 255px; bottom: 126px; }
      .rear { left: 174px; top: 160px; right: 320px; bottom: 34px; }
      .side { left: 260px; top: 138px; right: 249px; bottom: 162px; }
      .explorer { left: 196px; top: 122px; right: 285px; bottom: 12px; }
      .brand { position: absolute; right: 49px; bottom: 20px; display: flex; align-items: center; gap: 3px; color: #fff; opacity: .5; font: 38px/38px "Liberation Sans Narrow", "Roboto Condensed", "Liberation Sans", sans-serif; }
      .build { position: absolute; right: 6px; bottom: 1px; color: #fff; text-align: right; line-height: 14px; }
      .build p { margin: 0; font-weight: bold; }
      .build p:last-child { font-weight: normal; margin-top: 2px; }`;
  }

  markup() {
    return `
      <div class="area">
        <svg class="streaks" viewBox="0 0 1280 693" preserveAspectRatio="none" aria-hidden="true">
          <defs><linearGradient id="fade"><stop stop-color="#fff" stop-opacity=".09"/><stop offset="1" stop-color="#fff" stop-opacity="0"/></linearGradient></defs>
          <g fill="none" stroke="#fff">
            <path d="M40 694Q110 660 200 632" stroke-width="3" opacity=".7"/>
            <path d="M86 694Q125 630 200 590" stroke-width="2" opacity=".4"/>
            <path d="M92 694Q140 640 200 600" opacity=".4"/>
            <path d="M118 694Q150 655 200 620" stroke="#8cf06c" stroke-width="2" opacity=".9"/>
            <path d="M815 668Q850 680 900 702" stroke-width="6" opacity=".7"/>
            <path d="M985 592Q1060 550 1150 505" stroke="url(#fade)" stroke-width="8"/>
            <path d="M1180 58L1250 0" stroke-width="2" opacity=".08"/>
          </g>
        </svg>
        <div class="icons">${SHORTCUTS.map(([c, r, i, t]) => `<desk-icon icon="${i}" style="grid-area:${r}/${c}">${t}</desk-icon>`).join('')}</div>
        <win-frame class="rear" plain><blank-view split></blank-view></win-frame>
        <win-frame class="archive" icon="rar" caption="SoftPerfect RAM Disk.rar"><archive-view></archive-view></win-frame>
        <win-frame class="side" plain><blank-view></blank-view></win-frame>
        <win-frame class="explorer" active icon="windrive" caption="Local Disk (C:)"><explorer-view></explorer-view></win-frame>
        <div class="brand"><span>ANY</span>
          <svg width="56" height="64" viewBox="0 0 56 64" fill="none" stroke="#fff" stroke-width="4" stroke-linejoin="round" aria-hidden="true">
            <path d="M16 44V3l38 23v3L22 50M20 13l33 22-36 25v-7"/><path d="M12 9H9q-4 0-4 4v37l7 5V9"/>
          </svg><span>RUN</span></div>
        <div class="build"><p>Test Mode</p><p>Windows 7</p><p>Build 7601</p></div>
      </div>
      <task-bar></task-bar>`;
  }
}

customElements.define('ui-icon', UiIcon);
customElements.define('desk-icon', DeskIcon);
customElements.define('win-frame', WinFrame);
customElements.define('archive-view', ArchiveView);
customElements.define('blank-view', BlankView);
customElements.define('nav-bar', NavBar);
customElements.define('command-bar', CommandBar);
customElements.define('folder-tree', FolderTree);
customElements.define('file-list', FileList);
customElements.define('explorer-view', ExplorerView);
customElements.define('task-bar', TaskBar);
customElements.define('win-desktop', WinDesktop);
</script>
</body>
</html>
